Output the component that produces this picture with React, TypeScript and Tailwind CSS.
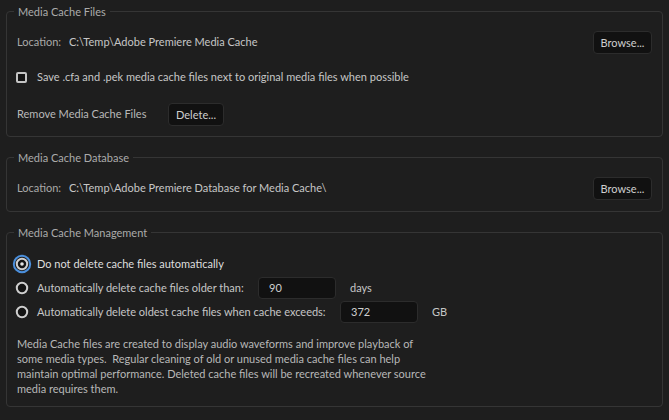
import React from 'react';

const Btn: React.FC<{ label: string; w: string }> = ({ label, w }) => (
  <button className={`h-[23px] ${w} rounded-[4px] bg-[#111111] border border-[#2c2c2c] text-[#cfcfcf] text-[11px] leading-none`}>
    {label}
  </button>
);

const Radio: React.FC<{ checked?: boolean }> = ({ checked }) => (
  <svg width="20" height="20" viewBox="0 0 20 20" className="shrink-0">
    {checked && <circle cx="10" cy="10" r="8.2" fill="none" stroke="#4b8fdc" strokeWidth="2" />}
    <circle cx="10" cy="10" r="5.2" fill="#141414" stroke="#cfcfcf" strokeWidth="2" />
    {checked && <circle cx="10" cy="10" r="1.8" fill="#e4e4e4" />}
  </svg>
);

const Field: React.FC<{ value: string }> = ({ value }) => (
  <div className="h-[22px] w-[78px] shrink-0 rounded-[4px] bg-[#111111] border border-[#2c2c2c] flex items-center pl-[10px] text-[#cfcfcf]">
    {value}
  </div>
);

const Group: React.FC<{ title: string; className?: string; children: React.ReactNode }> = ({ title, className, children }) => (
  <fieldset className={`border border-[#353535] rounded-[4px] pr-[10px] ${className ?? ''}`}>
    <legend className="px-[4px] text-[11px] leading-[15px] text-[#ababab]">{title}</legend>
    {children}
  </fieldset>
);

const App: React.FC = () => {
  return (
    <div
      className="w-[669px] h-[420px] bg-[#1e1e1e] pt-[4px] pl-[6px] pr-[6px] text-[11px] text-[#c6c6c6] overflow-hidden whitespace-nowrap"
      style={{ fontFamily: 'Lato, "Open Sans", sans-serif' }}
    >
      {/* Media Cache Files */}
      <Group title="Media Cache Files" className="pb-[10px] pl-[7px]">
        <div className="flex items-center h-[23px] mt-[12px] pl-[3px]">
          <span className="w-[52px] text-[#a9a9a9]">Location:</span>
          <span>C:\Temp\Adobe Premiere Media Cache</span>
          <div className="ml-auto">
            <Btn label="Browse..." w="w-[59px]" />
          </div>
        </div>
        <div className="flex items-center h-[23px] mt-[12px] pl-[3px]">
          <span className="w-[11px] h-[11px] ml-[-1px] rounded-[2px] border-2 border-[#c4c4c4] bg-[#141414]" />
          <span className="ml-[10px]">Save .cfa and .pek media cache files next to original media files when possible</span>
        </div>
        <div className="flex items-center h-[23px] mt-[14px] pl-[3px]">
          <span className="w-[151px] text-[#b9b9b9]">Remove Media Cache Files</span>
          <Btn label="Delete..." w="w-[56px]" />
        </div>
      </Group>

      {/* Media Cache Database */}
      <Group title="Media Cache Database" className="mt-[13px] pb-[11px] pl-[7px]">
        <div className="flex items-center h-[23px] mt-[12px] pl-[3px]">
          <span className="w-[52px] text-[#a9a9a9]">Location:</span>
          <span>C:\Temp\Adobe Premiere Database for Media Cache\</span>
          <div className="ml-auto">
            <Btn label="Browse..." w="w-[59px]" />
          </div>
        </div>
      </Group>

      {/* Media Cache Management */}
      <Group title="Media Cache Management" className="mt-[13px] pb-[10px] pl-[7px]">
        <div className="mt-[12px] -ml-[2px]">
          <div className="flex items-center h-[24px]">
            <Radio checked />
            <span className="ml-[5px] text-[#dedede]">Do not delete cache files automatically</span>
          </div>
          <div className="flex items-center h-[24px]">
            <Radio />
            <span className="ml-[5px] w-[221px]">Automatically delete cache files older than:</span>
            <Field value="90" />
            <span className="ml-[14px]">days</span>
          </div>
          <div className="flex items-center h-[24px]">
            <Radio />
            <span className="ml-[5px] w-[303px]">Automatically delete oldest cache files when cache exceeds:</span>
            <Field value="372" />
            <span className="ml-[14px]">GB</span>
          </div>
        </div>
        <p className="mt-[12px] ml-[3px] w-[412px] whitespace-normal leading-[15px] text-[#b8b8b8]">
          Media Cache files are created to display audio waveforms and improve playback of some media types.&nbsp; Regular cleaning of old or unused media cache files can help maintain optimal performance. Deleted cache files will be recreated whenever source media requires them.
        </p>
      </Group>
    </div>
  );
};

export default App;
